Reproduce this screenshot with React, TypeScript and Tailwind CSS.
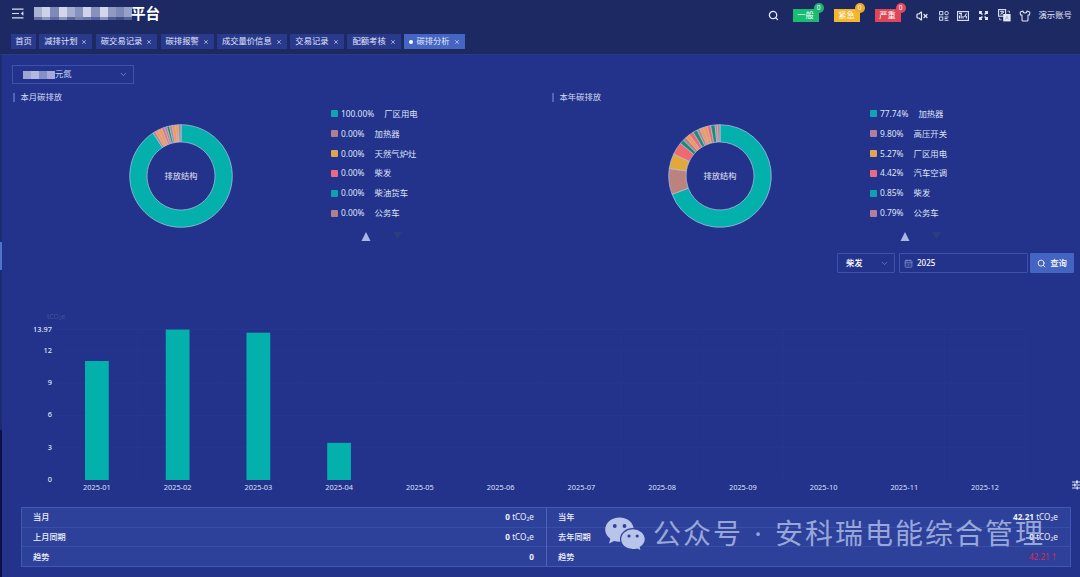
import { Search, VolumeX, Shirt, ChevronDown, CalendarDays, X } from "lucide-react";

type LegendItem = { value: string; name: string; color: string };

type Slice = { value: number; color: string };

const TEAL = "#03b0ab";
const BROWN = "#bb8380";
const YELLOW = "#e3a83c";
const RED = "#f0696f";
const GREEN = "#1f8a76";
const ORANGE = "#fd9450";

const tabs = [
  { label: "首页", width: "w-[25px]", closable: false },
  { label: "减排计划", width: "w-[53px]", closable: true },
  { label: "碳交易记录", width: "w-[61.5px]", closable: true },
  { label: "碳排报警", width: "w-[53px]", closable: true },
  { label: "成交量价信息", width: "w-[69.5px]", closable: true },
  { label: "交易记录", width: "w-[54px]", closable: true },
  { label: "配额考核", width: "w-[53.5px]", closable: true },
  { label: "碳排分析", width: "w-[60.5px]", closable: true, active: true },
];

const alarms = [
  { label: "一般", color: "bg-[#18bd71]", dot: "bg-[#22b277]", count: "0" },
  { label: "紧急", color: "bg-[#f3b72d]", dot: "bg-[#eda92c]", count: "0" },
  { label: "严重", color: "bg-[#df4658]", dot: "bg-[#e2485f]", count: "0" },
];

const monthLegend: LegendItem[] = [
  { value: "100.00%", name: "厂区用电", color: "#11a5b1" },
  { value: "0.00%", name: "加热器", color: "#b07f90" },
  { value: "0.00%", name: "天然气炉灶", color: "#e0a550" },
  { value: "0.00%", name: "柴发", color: "#e86b85" },
  { value: "0.00%", name: "柴油货车", color: "#11a0b1" },
  { value: "0.00%", name: "公务车", color: "#b07f90" },
];

const yearLegend: LegendItem[] = [
  { value: "77.74%", name: "加热器", color: "#11a5b1" },
  { value: "9.80%", name: "高压开关", color: "#b07f9b" },
  { value: "5.27%", name: "厂区用电", color: "#e0a550" },
  { value: "4.42%", name: "汽车空调", color: "#e86b85" },
  { value: "0.85%", name: "柴发", color: "#11a0b1" },
  { value: "0.79%", name: "公务车", color: "#b07f9b" },
];

// Degrees, clockwise from the top
const monthSlices: Slice[] = [
  { value: 327, color: TEAL },
  { value: 3, color: BROWN },
  { value: 4, color: ORANGE },
  { value: 4, color: ORANGE },
  { value: 3, color: RED },
  { value: 3, color: BROWN },
  { value: 3, color: GREEN },
  { value: 3, color: BROWN },
  { value: 4, color: ORANGE },
  { value: 3, color: ORANGE },
  { value: 3, color: BROWN },
];

const yearSlices: Slice[] = [
  { value: 249, color: TEAL },
  { value: 29.5, color: BROWN },
  { value: 17, color: YELLOW },
  { value: 14, color: RED },
  { value: 5, color: GREEN },
  { value: 4, color: BROWN },
  { value: 5, color: ORANGE },
  { value: 5, color: RED },
  { value: 5, color: GREEN },
  { value: 3.5, color: BROWN },
  { value: 4, color: ORANGE },
  { value: 4.5, color: ORANGE },
  { value: 4, color: RED },
  { value: 5, color: GREEN },
  { value: 2.5, color: BROWN },
  { value: 3, color: BROWN },
];

const months = [11.05, 13.97, 13.68, 3.45, 0, 0, 0, 0, 0, 0, 0, 0];
const ticks = [0, 3, 6, 9, 12, 13.97];

// Masked company name: main row, then the fainter row below it
const mosaic = [
  "#a9b2d2", "#cdd3e6", "#7f8abb", "#d2d7e9", "#a5aed0", "#8792bf", "#cfd4e8", "#8691be",
  "#d3d7ec", "#8f99c2", "#7c88b5", "#97a1c8",
  "#6571a5", "#8d97c0", "#5f6ba2", "#8a94be", "#5a669d", "#7480b0", "#6c78aa", "#5763a0",
  "#8992bd", "#4e5b95", "#3f4c86", "#55629a",
];

function arc(from: number, to: number, outer: number, inner: number) {
  const point = (deg: number, r: number) => {
    const a = ((deg - 90) * Math.PI) / 180;
    return `${(52 + r * Math.cos(a)).toFixed(2)} ${(52 + r * Math.sin(a)).toFixed(2)}`;
  };
  const large = to - from > 180 ? 1 : 0;
  return `M${point(from, outer)}A${outer} ${outer} 0 ${large} 1 ${point(to, outer)}L${point(to, inner)}A${inner} ${inner} 0 ${large} 0 ${point(from, inner)}Z`;
}

function Donut({ slices }: { slices: Slice[] }) {
  let start = 0;
  return (
    <svg width="104" height="104" viewBox="0 0 104 104">
      {slices.map((slice, i) => {
        const from = start;
        start += slice.value;
        return (
          <path key={i} d={arc(from, start, 51.3, 34)} fill={slice.color} stroke="#b3c4e6" strokeWidth="0.7" />
        );
      })}
      <text x="52" y="54.5" textAnchor="middle" fontSize="8.2" fill="#e3e8fa">
        排放结构
      </text>
    </svg>
  );
}

function StructurePanel({ title, slices, legend }: { title: string; slices: Slice[]; legend: LegendItem[] }) {
  return (
    <section className="w-[539px] h-[162px] shrink-0">
      <div className="flex items-center h-[13px] gap-[6px] text-[8.3px] text-[#d3dbf5]">
        <span className="w-[1.5px] h-[9px] bg-[#4c65bd]" />
        {title}
      </div>
      <div className="flex">
        <div className="pl-[116px] pt-[20px] w-[318px]">
          <Donut slices={slices} />
        </div>
        <div>
          {legend.map((item) => (
            <div key={item.name} className="flex items-center h-[19.9px] text-[8.4px] text-[#dfe5fa]">
              <span className="size-[7px] rounded-[1px] mr-[3px]" style={{ backgroundColor: item.color }} />
              <span className="mr-[10px]">{item.value}</span>
              <span>{item.name}</span>
            </div>
          ))}
          <svg className="ml-[30px] mt-[7px]" width="50" height="12" viewBox="0 0 50 12">
            <path d="M0.5 11 L5 2 L9.5 11Z" fill="#a9b7e3" />
            <text x="20" y="9" fontSize="7" fill="#24367c">
              1/3
            </text>
            <path d="M32 2 H41 L36.5 9.5Z" fill="#273f7c" />
          </svg>
        </div>
      </div>
    </section>
  );
}

function BarChart() {
  const base = 180;
  const unit = 10.77;
  const left = 54.6;
  const step = 80.73;
  return (
    <svg width="1078" height="197" viewBox="0 0 1078 197" className="block">
      <text x="45" y="18.5" fontSize="6.8" fill="#4152a0">
        tCO₂e
      </text>
      {ticks.map((tick) => (
        <g key={tick}>
          <line x1={left} x2={left + step * 12} y1={base - tick * unit} y2={base - tick * unit} stroke="#27378e" strokeWidth="1" />
          <text x="50" y={base - tick * unit + 2} textAnchor="end" fontSize="7.4" fontWeight="500" fill="#dbe2fa">
            {tick}
          </text>
        </g>
      ))}
      {months.map((_, i) => (
        <line key={i} x1={left + step * (i + 1)} x2={left + step * (i + 1)} y1="30" y2={base} stroke="#26368d" strokeWidth="1" />
      ))}
      {months.map((value, i) => (
        <g key={i}>
          <rect x={left + step * i + 28.4} y={base - value * unit} width="23.8" height={value * unit} fill={TEAL} />
          <text x={left + step * (i + 0.5)} y="189.8" textAnchor="middle" fontSize="7.4" fill="#dbe2fa">
            {`2025-${String(i + 1).padStart(2, "0")}`}
          </text>
        </g>
      ))}
      {/* Drawer handle on the right edge */}
      <g fill="#d5ddf5">
        <rect x="1070" y="181.5" width="8" height="1" />
        <rect x="1070" y="184.5" width="8" height="1" />
        <rect x="1070" y="187.5" width="8" height="1" />
        <rect x="1074" y="180.5" width="2" height="3" />
        <rect x="1072" y="183.5" width="1.5" height="3" />
        <rect x="1074.5" y="186.5" width="1.5" height="3" />
      </g>
    </svg>
  );
}

function Amount({ value }: { value: string }) {
  return (
    <span>
      <b className="font-bold">{value}</b> tCO₂e
    </span>
  );
}

function SummaryRow({ label, children, last }: { label: string; children: React.ReactNode; last?: boolean }) {
  return (
    <div
      className={`flex items-center justify-between h-[19.5px] pl-[11px] pr-[12px] ${last ? "" : "border-b border-[#384fa8]"}`}
    >
      <span className="font-medium">{label}</span>
      {children}
    </div>
  );
}

function HeaderIcons() {
  return (
    <div className="flex items-center text-[#e2e8fa]">
      <VolumeX className="size-[12px] mr-[11px]" strokeWidth={2.4} />
      <svg width="10" height="10" viewBox="0 0 10 10" className="mr-[8px]" fill="none" stroke="currentColor" strokeWidth="0.9">
        <rect x="0.6" y="0.6" width="3.2" height="3.2" />
        <rect x="6" y="0.6" width="3.2" height="3.2" rx="1" />
        <rect x="0.6" y="6" width="3.2" height="3.2" />
        <path d="M5.5 6h4M5.5 7.6h3M5.5 9.3h4" />
      </svg>
      <svg width="12" height="10" viewBox="0 0 12 10" className="mr-[10px]" fill="none" stroke="currentColor" strokeWidth="1.1">
        <rect x="0.6" y="0.6" width="10.8" height="8.8" />
        <path d="M2.5 7.5V4.5M4.2 7.5V3M6 7.5V5M7.5 6l2-3.5M9.3 7.5V5M2 2.4h3" />
      </svg>
      <svg width="9" height="9" viewBox="0 0 9 9" className="mr-[10px]" fill="none" stroke="currentColor" strokeWidth="1.4">
        <path d="M0.7 3V0.7H3M0.7 0.7L3.4 3.4M6 0.7h2.3V3M8.3 0.7L5.6 3.4M0.7 6v2.3H3M0.7 8.3L3.4 5.6M8.3 6v2.3H6M8.3 8.3L5.6 5.6" />
      </svg>
      <svg width="13" height="13" viewBox="0 0 13 13" className="mr-[8px]">
        <rect x="0.6" y="0.6" width="7" height="6.6" fill="none" stroke="currentColor" strokeWidth="1.1" />
        <path d="M2 2.5h4.2M4 1.5v4M2.2 5.3l3.8-2" stroke="currentColor" strokeWidth="0.8" />
        <rect x="5.2" y="5" width="7.4" height="7.4" fill="currentColor" />
        <path d="M7.4 10.6l1.5-3.8 1.5 3.8M8 9.5h1.9" fill="none" stroke="#a3aed6" strokeWidth="0.7" />
        <path d="M9.5 2.2h2v2M1.6 8.8v2h2" fill="none" stroke="currentColor" strokeWidth="0.7" />
      </svg>
      <Shirt className="size-[12px] mr-[8px]" strokeWidth={2.1} />
      <span className="text-[8.4px]">演示账号</span>
    </div>
  );
}

function Header() {
  return (
    <header className="h-[55px] bg-[#1c2963] border-b border-[#293c80]">
      <div className="flex justify-between h-[34px] pl-[12px] pr-[8px]">
        <div className="flex">
          <svg width="12" height="11" viewBox="0 0 12 11" className="mt-[8px]" fill="none" stroke="#d9e0f5" strokeWidth="1.2">
            <path d="M0 1.2h11.5M0 5.5h7M0 9.8h11.5" />
            <path d="M11.4 3.2v4.6L8.800 5.500Z" fill="#d9e0f5" stroke="none" />
          </svg>
          <div className="grid grid-cols-[repeat(12,8.200px)] grid-rows-[10px_3px] mt-[7px] ml-[10px] h-[13px] w-[98px]">
            {mosaic.map((color, i) => (
              <span key={i} style={{ backgroundColor: color }} />
            ))}
          </div>
          <h1 className="text-[14.6px] leading-[26px] font-bold text-white ml-[-1px]">平台</h1>
        </div>
        <div className="flex items-center h-[31px]">
          <Search className="size-[11px] text-[#e6ebfb] mr-[14px]" strokeWidth={2.8} />
          {alarms.map((alarm) => (
            <div
              key={alarm.label}
              className={`relative flex items-center justify-center w-[26px] h-[13px] mr-[15px] text-[8.2px] text-white ${alarm.color}`}
            >
              {alarm.label}
              <span
                className={`absolute top-[-6px] right-[-5px] flex items-center justify-center size-[10px] rounded-full text-[6.5px] ${alarm.dot}`}
              >
                {alarm.count}
              </span>
            </div>
          ))}
          <HeaderIcons />
        </div>
      </div>
      <nav className="flex gap-[3.4px] pl-[11px]">
        {tabs.map((tab) => (
          <div
            key={tab.label}
            className={`flex items-center justify-center h-[15px] text-[8.3px] whitespace-nowrap text-[#e2e7fa] ${tab.width} ${
              tab.active ? "bg-[#4565c2]" : "bg-[#293a8d]"
            }`}
          >
            {tab.active && <span className="size-[4px] rounded-full bg-white mr-[3px]" />}
            {tab.label}
            {tab.closable && <X className="size-[6px] ml-[4px]" strokeWidth={2.5} />}
          </div>
        ))}
      </nav>
    </header>
  );
}

function Watermark() {
  return (
    <div className="absolute left-[604px] top-[513px] flex items-center h-[40px] text-[#b6c3ec]/80">
      <svg width="42" height="36" viewBox="0 0 42 36">
        <path
          d="M15.5 2.5C7.5 2.5 1.2 8 1.2 14.6c0 3.7 2 6.9 5.1 9.2L5 28.6l5-2.7c1.7.5 3.6.8 5.5.8 8 0 14.3-5.4 14.3-12.1S23.5 2.5 15.5 2.5Z"
          fill="#b8c4ea"
        />
        <path
          d="M29 13.7c-6.9 0-12.4 4.7-12.4 10.5S22.1 34.7 29 34.7c1.5 0 2.9-.2 4.2-.6l4.2 2-1.1-3.8c3.1-1.9 5-4.8 5-8.1 0-5.8-5.500-10.500-12.300-10.500Z"
          fill="#b8c4ea"
          stroke="#2f4299"
          strokeWidth="1.2"
        />
        <g fill="#2f4299">
          <circle cx="10.8" cy="11" r="1.9" />
          <circle cx="20.5" cy="11" r="1.9" />
          <circle cx="25" cy="21" r="1.6" />
          <circle cx="33.2" cy="21" r="1.6" />
        </g>
      </svg>
      <div className="flex ml-[7px] text-[28px] leading-[40px] tracking-[2px] whitespace-nowrap">
        <span>公众号</span>
        <span className="w-[32px] text-center">·</span>
        <span>安科瑞电能综合管理</span>
      </div>
    </div>
  );
}

export default function App() {
  return (
    <div className="relative w-[1080px] h-[577px] overflow-hidden bg-[#23328a] font-['Noto_Sans','Noto_Sans_CJK_SC',sans-serif] leading-none">
      <Header />
      <div className="flex h-[522px]">
        {/* Collapsed sidebar */}
        <aside className="flex flex-col w-[2px] shrink-0">
          <div className="h-[187px] bg-[#1c2b70]" />
          <div className="h-[28px] bg-[#5273cd]" />
          <div className="h-[160px] bg-[#1c2a72]" />
          <div className="flex-1 bg-[#0b1145]" />
        </aside>
        <main className="w-[1078px] shrink-0">
          <div className="pt-[10px] pl-[10px]">
            <div className="flex items-center justify-between w-[122px] h-[19px] border border-[#3c52ac] pl-[10px] pr-[5px] text-[8.4px] text-[#c9d4f5]">
              <div className="flex items-center">
                <span className="w-[8px] h-[8px] bg-[#9ba6d5]" />
                <span className="w-[8px] h-[8px] bg-[#b3b8df]" />
                <span className="w-[8px] h-[8px] bg-[#858fc8]" />
                <span className="w-[8px] h-[8px] bg-[#aaa8d8]" />
                <span>元氮</span>
              </div>
              <ChevronDown className="size-[9px] text-[#7889cf]" strokeWidth={2.4} />
            </div>
          </div>
          <div className="flex pt-[7px] pl-[11px]">
            <StructurePanel title="本月碳排放" slices={monthSlices} legend={monthLegend} />
            <StructurePanel title="本年碳排放" slices={yearSlices} legend={yearLegend} />
          </div>
          <div className="flex h-[47px] pl-[835px] text-[8.4px] text-white">
            <div className="flex items-center justify-between w-[58px] h-[20px] border border-[#3c52ac] rounded-[1px] pl-[8px] pr-[5px] mr-[4px]">
              <span className="font-medium">柴发</span>
              <ChevronDown className="size-[9px] text-[#6c7dc6]" strokeWidth={2.2} />
            </div>
            <div className="flex items-center w-[129px] h-[20px] border border-[#3c52ac] rounded-[1px] pl-[4px] mr-[2px]">
              <CalendarDays className="size-[9px] mr-[4px] text-[#8594d3]" strokeWidth={2} />
              <span className="text-[8px] font-medium">2025</span>
            </div>
            <button className="flex items-center justify-center gap-[4px] w-[44px] h-[20px] rounded-[1px] bg-[#4364c0] font-medium">
              <Search className="size-[9px]" strokeWidth={2.2} />
              查询
            </button>
          </div>
          <BarChart />
          <div className="flex w-[1050px] h-[60px] ml-[19px] mt-[10px] border border-[#4059b1] bg-[#2e419a] text-[8.2px] text-[#eef1fd]">
            <div className="w-[525px] border-r border-[#4a64bb]">
              <SummaryRow label="当月">
                <Amount value="0" />
              </SummaryRow>
              <SummaryRow label="上月同期">
                <Amount value="0" />
              </SummaryRow>
              <SummaryRow label="趋势" last>
                <b>0</b>
              </SummaryRow>
            </div>
            <div className="flex-1">
              <SummaryRow label="当年">
                <Amount value="42.21" />
              </SummaryRow>
              <SummaryRow label="去年同期">
                <Amount value="0" />
              </SummaryRow>
              <SummaryRow label="趋势" last>
                <span className="text-[#d72955]">42.21↑</span>
              </SummaryRow>
            </div>
          </div>
        </main>
      </div>
      <Watermark />
    </div>
  );
}
